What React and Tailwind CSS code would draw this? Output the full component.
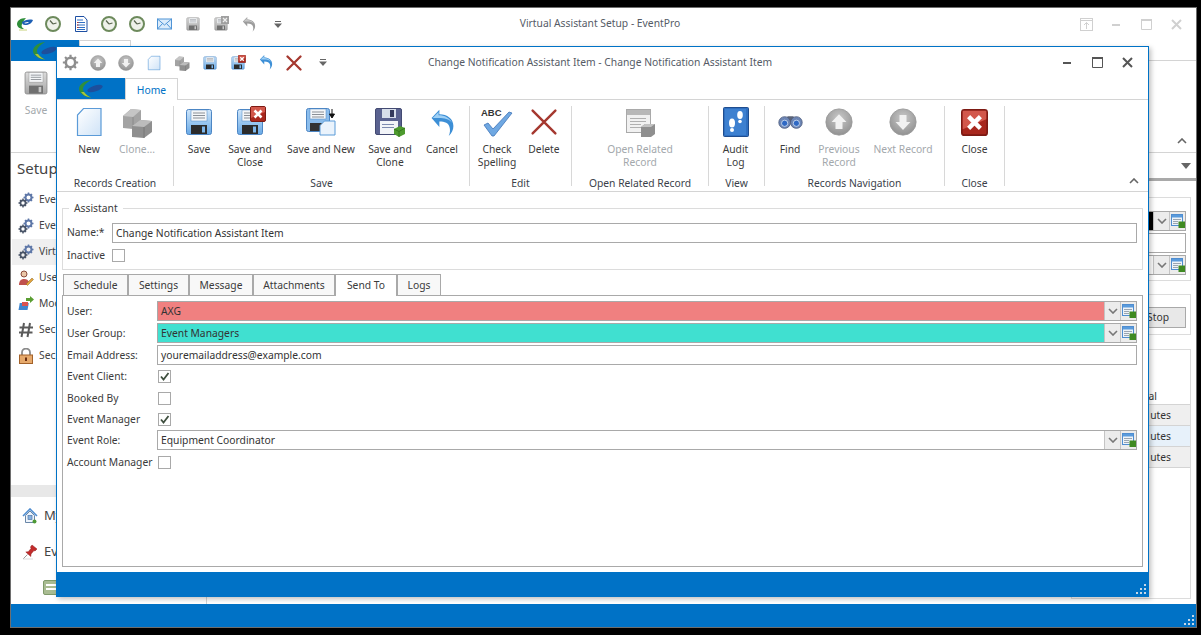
import { useId } from 'react'

// small svg set, everything is drawn on a 32x32 box unless noted
const Floppy = ({ size = 32, tone = 'blue' }) => {
    const id = useId()
    const c = tone === 'gray'
        ? { a: '#dcdcdc', b: '#a6a6a6', line: '#8f8f8f', dark: '#707070', slot: '#c8c8c8' }
        : { a: '#cfe6fa', b: '#68a9e6', line: '#4d86c4', dark: '#2b2b2b', slot: '#7db7ec' }
    return (
        <svg width={size} height={size} viewBox="0 0 32 32">
            <defs>
                <linearGradient id={id} x1="0" y1="0" x2="0" y2="1">
                    <stop offset="0" stopColor={c.a} />
                    <stop offset="1" stopColor={c.b} />
                </linearGradient>
            </defs>
            <rect x="3.5" y="3.5" width="25" height="25" rx="2" fill={`url(#${id})`} stroke={c.line} />
            <rect x="8" y="4" width="16" height="11" fill="#f4f6f8" stroke={c.line} strokeWidth=".5" />
            <path d="M10 7h12M10 9.500h12M10 12h12" stroke="#8a8f96" strokeWidth="1" />
            <rect x="8" y="19" width="16" height="9" fill={c.dark} />
            <rect x="19" y="20.500" width="3" height="6" fill={c.slot} />
        </svg>
    )
}

const RedBox = ({ size = 12 }) => (
    <svg width={size} height={size} viewBox="0 0 16 16">
        <rect x=".5" y=".5" width="15" height="15" rx="1.500" fill="#a8271d" stroke="#7d1a13" />
        <path d="M1 1h14v5L1 12z" fill="#d2574b" />
        <path d="M4.500 4.500l7 7M11.500 4.500l-7 7" stroke="#fff" strokeWidth="2.600" />
    </svg>
)

const FloppyClose = ({ size = 32, tone = 'blue' }) => (
    <span className="relative inline-block" style={{ width: size, height: size }}>
        <Floppy size={size} tone={tone} />
        <span className="absolute top-0 right-0 flex" style={{ width: size * 0.5, height: size * 0.5 }}>
            {tone === 'gray'
                ? <svg width="100%" height="100%" viewBox="0 0 16 16"><rect width="16" height="16" fill="#a0a0a0" /><path d="M4 4l8 8M12 4l-8 8" stroke="#eee" strokeWidth="2.500" /></svg>
                : <RedBox size={size * 0.5} />}
        </span>
    </span>
)

const Page = ({ size = 32, className = '' }) => {
    const id = useId()
    return (
        <svg width={size} height={size} viewBox="0 0 32 32" className={className}>
            <defs>
                <linearGradient id={id} x1="0" y1="0" x2="1" y2="1">
                    <stop offset="0" stopColor="#ffffff" />
                    <stop offset="1" stopColor="#cfe3f7" />
                </linearGradient>
            </defs>
            <path d="M10.500 2.500H28v27H4.500V9z" fill={`url(#${id})`} stroke="#5b9bd8" strokeWidth="1.200" />
        </svg>
    )
}

const SaveNew = () => (
    <svg width="32" height="32" viewBox="0 0 32 32">
        <rect x="1.500" y="2.500" width="23" height="23" rx="2" fill="#8bbdec" stroke="#4d86c4" />
        <rect x="5" y="3" width="16" height="10" fill="#f4f6f8" stroke="#4d86c4" strokeWidth=".5" />
        <path d="M7 6h12M7 8.500h12M7 11h12" stroke="#8a8f96" />
        <rect x="5" y="17" width="13" height="8" fill="#333" />
        <path d="M19.500 15H30v14H15v-9.500z" fill="#eaf3fc" stroke="#5b9bd8" />
        <path d="M27 3v8M24.500 8l2.500 4 2.500-4z" stroke="#111" fill="#111" strokeWidth="1" />
    </svg>
)

const SaveClone = () => (
    <svg width="32" height="32" viewBox="0 0 32 32">
        <rect x="1.500" y="2.500" width="26" height="26" rx="1.500" fill="#5a6290" stroke="#434a72" />
        <rect x="8" y="3" width="14" height="9" fill="#d7deea" />
        <rect x="16" y="4" width="4" height="7" fill="#343a5c" />
        <rect x="6" y="15" width="18" height="13" fill="#f2f4f8" />
        <path d="M8 18.500h12M8 21.500h12" stroke="#7d8bb0" />
        <path d="M20 23l6-3 5 2v6l-6 3-5-3z" fill="#4d9a2e" />
        <path d="M20 23l5 2.500 6-3.500M25 25.500V31" stroke="#2f6e17" fill="none" strokeWidth=".8" />
    </svg>
)

const Cubes = ({ size = 32 }) => (
    <svg width={size} height={size} viewBox="0 0 32 32">
        <path d="M2 10l8-7 10 1v11l-8 8-10-1z" fill="#a3a3a3" />
        <path d="M2 10l10 1 8-7-10-1z" fill="#c5c5c5" />
        <path d="M12 11v12" stroke="#8a8a8a" />
        <path d="M11 20l8-6 12 1v11l-8 6-12-1z" fill="#8f8f8f" />
        <path d="M11 20l12 1 8-6-12-1z" fill="#bcbcbc" />
        <path d="M23 21v11" stroke="#777" />
    </svg>
)

const Undo = ({ size = 32, tone = 'blue' }) => {
    const main = tone === 'gray' ? '#9c9c9c' : '#3d8fd6'
    const light = tone === 'gray' ? '#c8c8c8' : '#9fd0f5'
    return (
        <svg width={size * 0.78} height={size * 0.9} viewBox="0 0 32 32" preserveAspectRatio="none">
            <path d="M2 11L12 2v5c10 0 18 5 18 13 0 4-2 8-6 11 2-4 2-7 1-10-1-4-6-6-13-6v6z" fill={main} />
            <path d="M3.500 11L11 4.500V8c8 0 14 3 17 8-4-4-9-5-17-5z" fill={light} />
        </svg>
    )
}

const BigX = ({ size = 28, weight = 2.800 }) => (
    <svg width={size} height={size} viewBox="0 0 32 32">
        <path d="M3 3l26 26M29 3L3 29" stroke="#a5382f" strokeWidth={weight} strokeLinecap="round" />
    </svg>
)

const Check = () => (
    <svg width="32" height="32" viewBox="0 0 32 32">
        <text x="0" y="10" fontFamily="Liberation Sans, sans-serif" fontWeight="700" fontSize="9.500" fill="#333">ABC</text>
        <path d="M3 19l4-2 5 6L28 6l3 1-18 23h-2z" fill="#6fa8e2" stroke="#3e74b8" strokeWidth=".8" />
    </svg>
)

const Record = () => (
    <svg width="32" height="32" viewBox="0 0 32 32">
        <rect x="2.500" y="3.500" width="24" height="23" fill="#f1f1f1" stroke="#a9a9a9" />
        <rect x="3" y="4" width="23" height="5" fill="#b8b8b8" />
        <rect x="6" y="12" width="16" height="1" fill="#b0b0b0" />
        <rect x="6" y="15" width="16" height="1" fill="#b0b0b0" />
        <rect x="6" y="18" width="11" height="1" fill="#b0b0b0" />
        <rect x="6" y="21" width="11" height="1" fill="#b0b0b0" />
        <path d="M17 21l4-3h10v10l-4 3H17z" fill="#8f8f8f" />
        <path d="M17 21l4-3h10l-4 3z" fill="#c2c2c2" />
    </svg>
)

const AuditBook = () => (
    <svg width="32" height="32" viewBox="0 0 32 32">
        <rect x="3.500" y="1.500" width="25" height="29" rx="1" fill="#2f6fc0" stroke="#1f4d8f" />
        <rect x="5" y="3" width="21" height="26" fill="#3d80d0" />
        <ellipse cx="12" cy="17" rx="3" ry="4.500" fill="#fff" />
        <circle cx="12" cy="24" r="2" fill="#fff" />
        <ellipse cx="20" cy="9" rx="2.800" ry="4" fill="#fff" />
        <circle cx="20" cy="15.500" r="1.800" fill="#fff" />
    </svg>
)

const Binoculars = () => (
    <svg width="25" height="25" viewBox="0 0 32 32">
        <rect x="12" y="8" width="8" height="8" fill="#5c6478" />
        <circle cx="8.500" cy="16" r="7.500" fill="#6d86b5" stroke="#4b5a7a" />
        <circle cx="23.500" cy="16" r="7.500" fill="#6d86b5" stroke="#4b5a7a" />
        <circle cx="8.500" cy="17" r="4" fill="#2f69c4" stroke="#d8e6f5" />
        <circle cx="23.500" cy="17" r="4" fill="#2f69c4" stroke="#d8e6f5" />
    </svg>
)

const RoundArrow = ({ size = 28, down = false }) => {
    const id = useId()
    return (
        <svg width={size} height={size} viewBox="0 0 32 32">
            <defs>
                <radialGradient id={id} cx=".5" cy=".35" r=".7">
                    <stop offset="0" stopColor="#c9c9c9" />
                    <stop offset="1" stopColor="#8d8d8d" />
                </radialGradient>
            </defs>
            <circle cx="16" cy="16" r="15" fill={`url(#${id})`} stroke="#9a9a9a" />
            <g transform={down ? 'rotate(180 16 16)' : undefined}>
                <path d="M16 7l8.500 9H20v8h-8v-8H7.500z" fill="#f1f1f1" />
            </g>
        </svg>
    )
}

const Gear = ({ size = 20, color = '#8e8e8e' }) => (
    <svg width={size} height={size} viewBox="0 0 20 20">
        <circle cx="10" cy="10" r="5.500" fill="none" stroke={color} strokeWidth="3" />
        <path d="M10 1v3.500M10 15.500V19M1 10h3.500M15.500 10H19M3.600 3.600l2.500 2.500M13.900 13.900l2.500 2.500M16.400 3.600l-2.500 2.500M6.100 13.900l-2.500 2.500" stroke={color} strokeWidth="2.600" />
    </svg>
)

const SideGears = () => (
    <svg width="16" height="16" viewBox="0 0 16 16">
        <g fill="none">
            <circle cx="10.500" cy="5.500" r="3" stroke="#5f78a8" strokeWidth="2" />
            <path d="M10.500 .5v2M10.500 8.500v2M5.500 5.500h2M13.500 5.500h2M7 2l1.400 1.400M14 2l-1.400 1.400M7 9l1.400-1.400M14 9l-1.400-1.400" stroke="#5f78a8" strokeWidth="1.500" />
            <circle cx="5" cy="11" r="2.600" stroke="#4a5568" strokeWidth="1.800" />
            <path d="M5 6.500v2M5 13.500v2M.5 11h2M7.500 11h2M2 8l1.300 1.300M8 8L6.700 9.300M2 14l1.300-1.300M8 14l-1.300-1.300" stroke="#4a5568" strokeWidth="1.400" />
        </g>
    </svg>
)

const UserPen = () => (
    <svg width="16" height="16" viewBox="0 0 16 16">
        <circle cx="6" cy="4" r="3" fill="#e9c6a8" stroke="#8a4b3c" />
        <path d="M1 15c0-4 2-6 5-6s4 1 5 3l-2 3z" fill="#c0504d" />
        <path d="M8 14l6-6 1.500 1.500-6 6z" fill="#e2a33c" stroke="#8a6420" strokeWidth=".5" />
    </svg>
)

const Modules = () => (
    <svg width="16" height="16" viewBox="0 0 16 16">
        <rect x="1" y="7" width="9" height="7" fill="#3e86cf" transform="skewX(-10) translate(2 0)" />
        <rect x="4" y="6" width="6" height="4" fill="#d9534f" />
        <path d="M8 2h4V0l4 3.500L12 7V5H8z" fill="#5a9e32" />
    </svg>
)

const Hash = () => (
    <svg width="16" height="16" viewBox="0 0 16 16">
        <path d="M6 1L3.500 15M12 1L9.500 15M1.500 5.500h13.500M1 10.500h13.500" stroke="#5a5a5a" strokeWidth="2" />
    </svg>
)

const Lock = () => (
    <svg width="16" height="16" viewBox="0 0 16 16">
        <path d="M4 7V4.500a4 4 0 0 1 8 0V7" fill="none" stroke="#8b8b8b" strokeWidth="1.800" />
        <rect x="1.500" y="7" width="13" height="8.500" fill="#e6a96b" stroke="#a3622a" />
        <rect x="7" y="9.500" width="2" height="3.500" fill="#6b2f10" />
    </svg>
)

const Home = () => (
    <svg width="16" height="16" viewBox="0 0 16 16">
        <path d="M1 8l7-7 7 7" fill="none" stroke="#4f8dd0" strokeWidth="1.600" />
        <path d="M3.500 7.500v7h9v-7L8 3z" fill="#eef4fb" stroke="#6a87a8" />
        <rect x="6" y="7.500" width="4" height="4" fill="#8ab4e0" stroke="#4f77a8" strokeWidth=".7" />
        <circle cx="12.500" cy="13.500" r="2" fill="#4e9a36" />
    </svg>
)

const Pin = () => (
    <svg width="16" height="16" viewBox="0 0 16 16">
        <path d="M10 1l5 4-2 2-1-.5-3 3.500-.2 2.500-5-4.500 2.500-.3L9 4.500 8.500 3z" fill="#c22b2b" stroke="#8e1a1a" strokeWidth=".5" />
        <path d="M5.500 10.500L1 15" stroke="#999" />
        <path d="M1 15h10" stroke="#ddd" />
    </svg>
)

const Lookup = () => (
    <svg width="14" height="14" viewBox="0 0 14 14">
        <rect x=".5" y=".5" width="11" height="11" fill="#eef3f8" stroke="#4f8dd0" />
        <rect x="1" y="1" width="10" height="2.500" fill="#5a9bdc" />
        <path d="M2 5.500h8M2 7.500h5M2 9.500h5" stroke="#9aa5b1" />
        <rect x="7.500" y="7.500" width="6.500" height="6.500" fill="#3f8a22" />
    </svg>
)

const Clock = () => (
    <svg width="16" height="16" viewBox="0 0 16 16">
        <circle cx="8" cy="8" r="7" fill="#eef1ea" stroke="#6d8a5c" strokeWidth="2" />
        <path d="M8 8L5 4.500M8 8l3.500-1" stroke="#5a6650" strokeWidth="1.200" />
    </svg>
)

const Doc = () => (
    <svg width="16" height="16" viewBox="0 0 16 16">
        <path d="M2.500 .5H11L14 4v11.500H2.500z" fill="#fff" stroke="#1d4fa3" />
        <path d="M4 4h6M4 6.500h8M4 9h8M4 11.500h8M4 13.500h8" stroke="#2f6fc4" />
        <path d="M4 6.500h1.500M4 9h1.500M4 11.500h1.500" stroke="#c0392b" />
    </svg>
)

const Mail = () => (
    <svg width="16" height="16" viewBox="0 0 16 16">
        <rect x=".5" y="3" width="14" height="10" fill="#dcecfb" stroke="#4f94d6" />
        <path d="M.5 3l7 6 7-6M.5 13l5-5.500M14.500 13l-5-5.500" fill="none" stroke="#4f94d6" />
    </svg>
)

const Logo = () => (
    <svg width="24" height="18" viewBox="0 0 24 18">
        <path d="M12 0C4 1 0 5 0 9c0 4 5 8 12 8.500C7 15 4 12 4 9c0-3 3-6 8-9z" fill="#2f8f3a" />
        <path d="M2 12c2 3 5 5 10 5.500-3-1-5-3-7-5.500z" fill="#a9c43b" />
        <ellipse cx="16" cy="8.500" rx="8" ry="3" fill="#1d4f9c" transform="rotate(-18 16 8.500)" />
    </svg>
)

const SmallLogo = () => (
    <svg width="18" height="18" viewBox="0 0 18 18">
        <path d="M10 3C4 3 1 6 1 9s3 5 7 5c-2-1-3-3-2-5s2-4 4-6z" fill="#2f8f3a" />
        <path d="M6 7c3-2 7-3 11-2-1 3-4 5-8 5-2 0-3-1-3-3z" fill="#1d5fb4" />
        <path d="M8 8c2-1 3-1 5-1-1 1-3 2-5 1z" fill="#fff" />
        <path d="M3 15h8" stroke="#c8d27a" />
    </svg>
)

const Overflow = () => (
    <svg width="8" height="7" viewBox="0 0 8 7" fill="#666">
        <rect x="1" y="0" width="6" height="1" />
        <path d="M0 2.500h8L4 7z" />
    </svg>
)

const Chevron = ({ up = false, color = '#666' }) => (
    <svg width="10" height="6" viewBox="0 0 10 6">
        <path d={up ? 'M1 5l4-4 4 4' : 'M1 1l4 4 4-4'} fill="none" stroke={color} strokeWidth="1.600" />
    </svg>
)

const WinBtns = ({ color }) => (
    <>
        <span className="w-[30px] flex justify-center">
            <svg width="10" height="10" viewBox="0 0 10 10"><rect x="1" y="5" width="8" height="2" fill={color} /></svg>
        </span>
        <span className="w-[30px] flex justify-center">
            <svg width="11" height="11" viewBox="0 0 11 11"><path d="M.5 .5h10v10H.5z" fill="none" stroke={color} /><rect y="0" width="11" height="2" fill={color} /></svg>
        </span>
        <span className="w-[30px] flex justify-center">
            <svg width="11" height="11" viewBox="0 0 11 11"><path d="M1 1l9 9M10 1l-9 9" stroke={color} strokeWidth="2" /></svg>
        </span>
    </>
)

const Grip = () => (
    <svg width="11" height="11" viewBox="0 0 11 11" fill="#c6d8e8">
        <rect x="8" y="0" width="2" height="2" />
        <rect x="4" y="4" width="2" height="2" />
        <rect x="8" y="4" width="2" height="2" />
        <rect x="0" y="8" width="2" height="2" />
        <rect x="4" y="8" width="2" height="2" />
        <rect x="8" y="8" width="2" height="2" />
    </svg>
)

const ribbon = [
    {
        label: 'Records Creation', w: 'w-[116px]', pad: 'pl-[8px]',
        items: [
            { w: 'w-[48px]', icon: <Page />, text: 'New' },
            { w: 'w-[48px]', icon: <Cubes />, text: 'Clone...', off: true },
        ],
    },
    {
        label: 'Save', w: 'w-[295px]', pad: 'pl-[6px]',
        items: [
            { w: 'w-[38px]', icon: <Floppy />, text: 'Save' },
            { w: 'w-[64px]', icon: <FloppyClose />, text: 'Save and Close' },
            { w: 'w-[78px]', icon: <SaveNew />, text: 'Save and New' },
            { w: 'w-[60px]', icon: <SaveClone />, text: 'Save and Clone' },
            { w: 'w-[44px]', icon: <Undo />, text: 'Cancel' },
        ],
    },
    {
        label: 'Edit', w: 'w-[101px]', pad: 'pl-[4px]',
        items: [
            { w: 'w-[46px]', icon: <Check />, text: 'Check Spelling' },
            { w: 'w-[48px]', icon: <BigX />, text: 'Delete' },
        ],
    },
    {
        label: 'Open Related Record', w: 'w-[136px]', pad: '',
        items: [{ w: 'w-[136px]', icon: <Record />, text: 'Open Related Record', off: true, tw: 'w-[80px]' }],
    },
    {
        label: 'View', w: 'w-[55px]', pad: '',
        items: [{ w: 'w-[53px]', icon: <AuditBook />, text: 'Audit Log', tw: 'w-[32px]' }],
    },
    {
        label: 'Records Navigation', w: 'w-[179px]', pad: 'pl-[7px]',
        items: [
            { w: 'w-[36px]', icon: <Binoculars />, text: 'Find' },
            { w: 'w-[62px]', icon: <RoundArrow />, text: 'Previous Record', off: true },
            { w: 'w-[66px]', icon: <RoundArrow down />, text: 'Next Record', off: true, nowrap: true },
        ],
    },
    {
        label: 'Close', w: 'w-[59px]', pad: '',
        items: [{ w: 'w-[59px]', icon: <RedBox size={27} />, text: 'Close' }],
    },
]

const RibbonGroup = ({ group }) => (
    <div className={`${group.w} shrink-0 h-[80px] flex flex-col border-r border-[#d8d8d8] box-content`}>
        <div className={`flex h-[71px] shrink-0 ${group.pad}`}>
            {group.items.map(it => (
                <div key={it.text} className={`${it.w} shrink-0 flex flex-col items-center`}>
                    <div className="h-[32px] flex items-center justify-center">{it.icon}</div>
                    <div className={`mt-[5px] text-center leading-[13px] ${it.tw || ''} ${it.nowrap ? 'whitespace-nowrap' : ''} ${it.off ? 'text-[#a3a8ac]' : 'text-[#3b3b3b]'}`}>{it.text}</div>
                </div>
            ))}
        </div>
        <div className="text-center leading-[12px] text-[#3b3f4a]">{group.label}</div>
    </div>
)

const Field = ({ label, children, className = '' }) => (
    <div className={`flex items-center h-[20px] mb-[2px] ${className}`}>
        <span className="w-[90px] shrink-0 pt-[1px] text-[#3b3b3b]">{label}</span>
        {children}
    </div>
)

const Combo = ({ value, color = 'bg-white', text = 'text-[#333]' }) => (
    <div className="flex-1 h-[20px] flex border border-[#a9a9a9]">
        <div className={`flex-1 ${color} ${text} pl-[3px] leading-[18px]`}>{value}</div>
        <div className="w-[16px] bg-[#ececec] border-l border-[#c4c4c4] flex items-center justify-center"><Chevron color="#777" /></div>
        <div className="w-[16px] bg-[#ececec] border-l border-[#c4c4c4] flex items-center justify-center"><Lookup /></div>
    </div>
)

const Check2 = ({ on }) => (
    <span className="w-[13px] h-[13px] border border-[#a9a9a9] bg-white flex items-center justify-center">
        {on && <svg width="11" height="11" viewBox="0 0 11 11"><path d="M2 5.500l2.500 3L9.500 2" fill="none" stroke="#3f4f3f" strokeWidth="1.800" /></svg>}
    </span>
)

const CheckRow = ({ label, on, className = 'h-[21px]', nudge = 'pt-[1px]' }) => (
    <div className={`flex items-center ${className}`}>
        <span className={`w-[91px] shrink-0 text-[#3b3b3b] whitespace-nowrap ${nudge}`}>{label}</span>
        <Check2 on={on} />
    </div>
)

const tabs = [
    ['Schedule', 'w-[65px]'], ['Settings', 'w-[61px]'], ['Message', 'w-[64px]'],
    ['Attachments', 'w-[82px]'], ['Send To', 'w-[62px]'], ['Logs', 'w-[44px]'],
]

// only the part of these labels that shows beside the open window
const sideItems = [
    [<SideGears />, 'Eve'], [<SideGears />, 'Eve'], [<SideGears />, 'Virt'],
    [<UserPen />, 'Use'], [<Modules />, 'Mod'], [<Hash />, 'Sec'], [<Lock />, 'Sec'],
]

const ChangeWindow = () => (
    <div className="absolute left-[56px] top-[46px] w-[1093px] h-[551px] bg-white border border-[#0072c6] shadow-[2px_2px_5px_rgba(0,0,0,0.25)] flex flex-col">
        <div className="h-[31px] flex items-center pl-[3px] shrink-0">
            <div className="flex items-center">
                <span className="w-[20px] flex justify-center"><Gear size={17} /></span>
                <span className="w-[28px] ml-[4px] flex justify-center"><RoundArrow size={16} /></span>
                <span className="w-[28px] flex justify-center"><RoundArrow size={16} down /></span>
                <span className="w-[28px] flex justify-center"><Page size={16} /></span>
                <span className="w-[28px] flex justify-center"><Cubes size={16} /></span>
                <span className="w-[28px] flex justify-center"><Floppy size={16} /></span>
                <span className="w-[28px] flex justify-center"><FloppyClose size={16} /></span>
                <span className="w-[28px] flex justify-center"><Undo size={18} /></span>
                <span className="w-[28px] flex justify-center"><BigX size={16} weight={4.500} /></span>
                <span className="w-[30px] flex justify-center"><Overflow /></span>
            </div>
            <div className="flex-1 text-center text-[#555b66] mr-[190px]">Change Notification Assistant Item - Change Notification Assistant Item</div>
            <div className="flex mr-[6px]"><WinBtns color="#555" /></div>
        </div>
        <div className="h-[22px] flex shrink-0 border-b border-[#d4d4d4]">
            <div className="w-[68px] h-[21px] bg-[#0072c6] flex items-center justify-center"><Logo /></div>
            <div className="w-[53px] h-[22px] bg-white border border-b-0 border-[#d4d4d4] text-center text-[#0072c6] leading-[22px]">Home</div>
        </div>
        <div className="relative h-[92px] shrink-0 border-b border-[#d4d4d4] flex pt-[6px]">
            {ribbon.map(g => <RibbonGroup key={g.label} group={g} />)}
            <span className="absolute right-[9px] bottom-[7px] flex"><Chevron up /></span>
        </div>
        <div className="flex-1 flex flex-col px-[5px] pt-[16px] pb-[5px]">
            <div className="relative h-[62px] border border-[#dcdcdc] px-[4px] pt-[14px] shrink-0">
                <span className="absolute left-[6px] -top-[7px] bg-white px-[5px] leading-[13px] text-[#3b3b3b]">Assistant</span>
                <div className="flex items-center h-[20px]">
                    <span className="w-[45px] shrink-0 text-[#3b3b3b]">Name:*</span>
                    <div className="flex-1 h-[20px] border border-[#a9a9a9] pl-[3px] leading-[18px] text-[#333]">Change Notification Assistant Item</div>
                    <span className="w-[1px]" />
                </div>
                <div className="flex items-center h-[24px]">
                    <span className="w-[45px] shrink-0 pt-[1px] text-[#3b3b3b]">Inactive</span>
                    <Check2 />
                </div>
            </div>
            <div className="flex h-[21px] mt-[4px] pl-[1px] shrink-0">
                {tabs.map(([t, w]) => (
                    <div key={t} className={`${w} text-center leading-[20px] border border-b-0 border-[#a9a9a9] text-[#3b3b3b] ${t === 'Send To' ? 'bg-white relative z-10 h-[22px]' : 'bg-[#f8f8f8]'}`}>{t}</div>
                ))}
            </div>
            <div className="flex-1 border border-[#a9a9a9] pl-[4px] pr-[5px] pt-[5px]">
                <Field label="User:"><Combo value="AXG" color="bg-[#f08080]" /></Field>
                <Field label="User Group:"><Combo value="Event Managers" color="bg-[#40e0d0]" /></Field>
                <Field label="Email Address:"><div className="flex-1 h-[20px] border border-[#a9a9a9] pl-[3px] leading-[18px] text-[#333]">youremailaddress@example.com</div></Field>
                <CheckRow label="Event Client:" on className="h-[21px] -mt-[1px]" />
                <CheckRow label="Booked By" className="h-[21px] mt-[1px]" nudge="" />
                <CheckRow label="Event Manager" on className="h-[20px]" />
                <Field label="Event Role:" className="mt-[1px]"><Combo value="Equipment Coordinator" /></Field>
                <CheckRow label="Account Manager" nudge="" />
            </div>
        </div>
        <div className="h-[24px] bg-[#0072c6] shrink-0 flex items-end justify-end pr-[1px] pb-[1px]"><Grip /></div>
    </div>
)

export default function App() {
    return (
        <div className="relative w-[1201px] h-[635px] bg-black overflow-hidden pl-[10px] pt-[7px] text-[10.3px] font-['Noto_Sans',sans-serif]">
            <div className="w-[1187px] h-[621px] bg-white border border-[#6e6e6e] flex flex-col">
                <div className="h-[32px] flex items-center shrink-0">
                    <div className="flex items-center">
                        {[<SmallLogo />, <Clock />, <Doc />, <Clock />, <Clock />, <Mail />, <Floppy size={16} tone="gray" />, <FloppyClose size={16} tone="gray" />, <Undo size={18} tone="gray" />].map((ic, i) => (
                            <span key={i} className="w-[28px] flex justify-center">{ic}</span>
                        ))}
                        <span className="w-[30px] flex justify-center"><Overflow /></span>
                    </div>
                    <div className="flex-1 text-center text-[#555b66] mr-[164px]">Virtual Assistant Setup - EventPro</div>
                    <div className="flex items-center mr-[5px]">
                        <span className="w-[30px] flex justify-center">
                            <svg width="13" height="13" viewBox="0 0 13 13" fill="none" stroke="#d0d0d0"><rect x=".5" y=".5" width="12" height="12" /><path d="M0 2.500h13M6.500 11V4.500M4 7l2.500-2.500L9 7" /></svg>
                        </span>
                        <WinBtns color="#d0d0d0" />
                    </div>
                </div>
                <div className="h-[21px] flex shrink-0 border-b border-[#d4d4d4]">
                    <div className="w-[68px] h-[21px] bg-[#0072c6] flex items-center justify-center"><Logo /></div>
                    <div className="w-[52px] h-[21px] border border-b-0 border-[#d4d4d4]" />
                </div>
                <div className="relative h-[92px] shrink-0 border-b border-[#d4d4d4] flex">
                    <div className="w-[50px] flex flex-col items-center pt-[8px]">
                        <Floppy size={28} tone="gray" />
                        <span className="mt-[6px] text-[#a3a8ac]">Save</span>
                    </div>
                    <span className="absolute right-[9px] bottom-[8px] flex"><Chevron up /></span>
                </div>
                <div className="flex-1 flex min-h-0">
                    <div className="w-[196px] shrink-0 border-r border-[#d4d4d4] flex flex-col">
                        <div className="text-[15px] leading-[24px] text-[#444] pl-[6px] pt-[3px]">Setup</div>
                        <div className="mt-[7px] pl-[1px]">
                            {sideItems.map(([ic, t], i) => (
                                <div key={i} className={`h-[26px] flex items-center gap-[5px] pl-[6px] ${i === 2 ? 'bg-[#f0f0f0]' : ''}`}>
                                    {ic}
                                    <span className="text-[#444]">{t}</span>
                                </div>
                            ))}
                        </div>
                        <div className="mt-auto">
                            <div className="h-[12px] bg-[#e8e8e8]" />
                            <div className="h-[38px] flex items-center gap-[6px] pl-[11px] text-[13px] text-[#444]"><Home />My</div>
                            <div className="h-[34px] flex items-center gap-[6px] pl-[11px] text-[13px] text-[#444]"><Pin />Ev</div>
                            <div className="h-[35px] pl-[32px] pt-[11px]">
                                <div className="w-[16px] h-[15px] rounded-[2px] bg-[#a9bc92] border border-[#7f9a6a] flex flex-col gap-[2px] pt-[3px] px-[2px]">
                                    <div className="h-[2px] bg-white" />
                                    <div className="h-[2px] bg-white" />
                                </div>
                            </div>
                        </div>
                    </div>
                    <div className="flex-1 flex flex-col min-w-0 items-end pr-[5px]">
                        <div className="relative w-full h-[28px] shrink-0 border-b-[3px] border-[#a9a9a9] -mr-[5px]">
                            <span className="absolute right-[5px] top-[10px] w-0 h-0 border-x-[5px] border-x-transparent border-t-[6px] border-t-[#666]" />
                        </div>
                        <div className="w-[120px] h-[84px] mt-[16px] border border-[#dcdcdc] shrink-0 flex flex-col pl-[1px] pr-[4px] pt-[13px] gap-[2px]">
                            <div className="flex h-[20px] shrink-0"><Combo value="" color="bg-black" /></div>
                            <div className="h-[20px] shrink-0 border border-[#a9a9a9]" />
                            <div className="flex h-[20px] shrink-0"><Combo value="" /></div>
                        </div>
                        <div className="w-[120px] h-[41px] mt-[13px] border border-[#dcdcdc] shrink-0 flex justify-end pr-[4px] pt-[12px]">
                            <div className="w-[56px] h-[21px] bg-[#e8e8e8] border border-[#a9a9a9] text-center leading-[19px] text-[#333]">Stop</div>
                        </div>
                        <div className="w-[120px] flex-1 mt-[14px] mb-[5px] border border-[#dcdcdc] flex flex-col pt-[39px] min-h-0">
                            <div className="h-[15px] pr-[33px] text-right leading-[15px] text-[#333]">al</div>
                            {['bg-[#efefef]', 'bg-[#e7f1fa]', 'bg-[#efefef]'].map((c, i) => (
                                <div key={i} className={`h-[21px] border-t border-[#d4d4d4] ${c} pr-[19px] text-right leading-[21px] text-[#333]`}>utes</div>
                            ))}
                            <div className="border-t border-[#d4d4d4]" />
                        </div>
                    </div>
                </div>
                <div className="h-[23px] bg-[#0072c6] shrink-0 flex items-end justify-end pr-[1px] pb-[1px]"><Grip /></div>
            </div>
            <ChangeWindow />
        </div>
    )
}
